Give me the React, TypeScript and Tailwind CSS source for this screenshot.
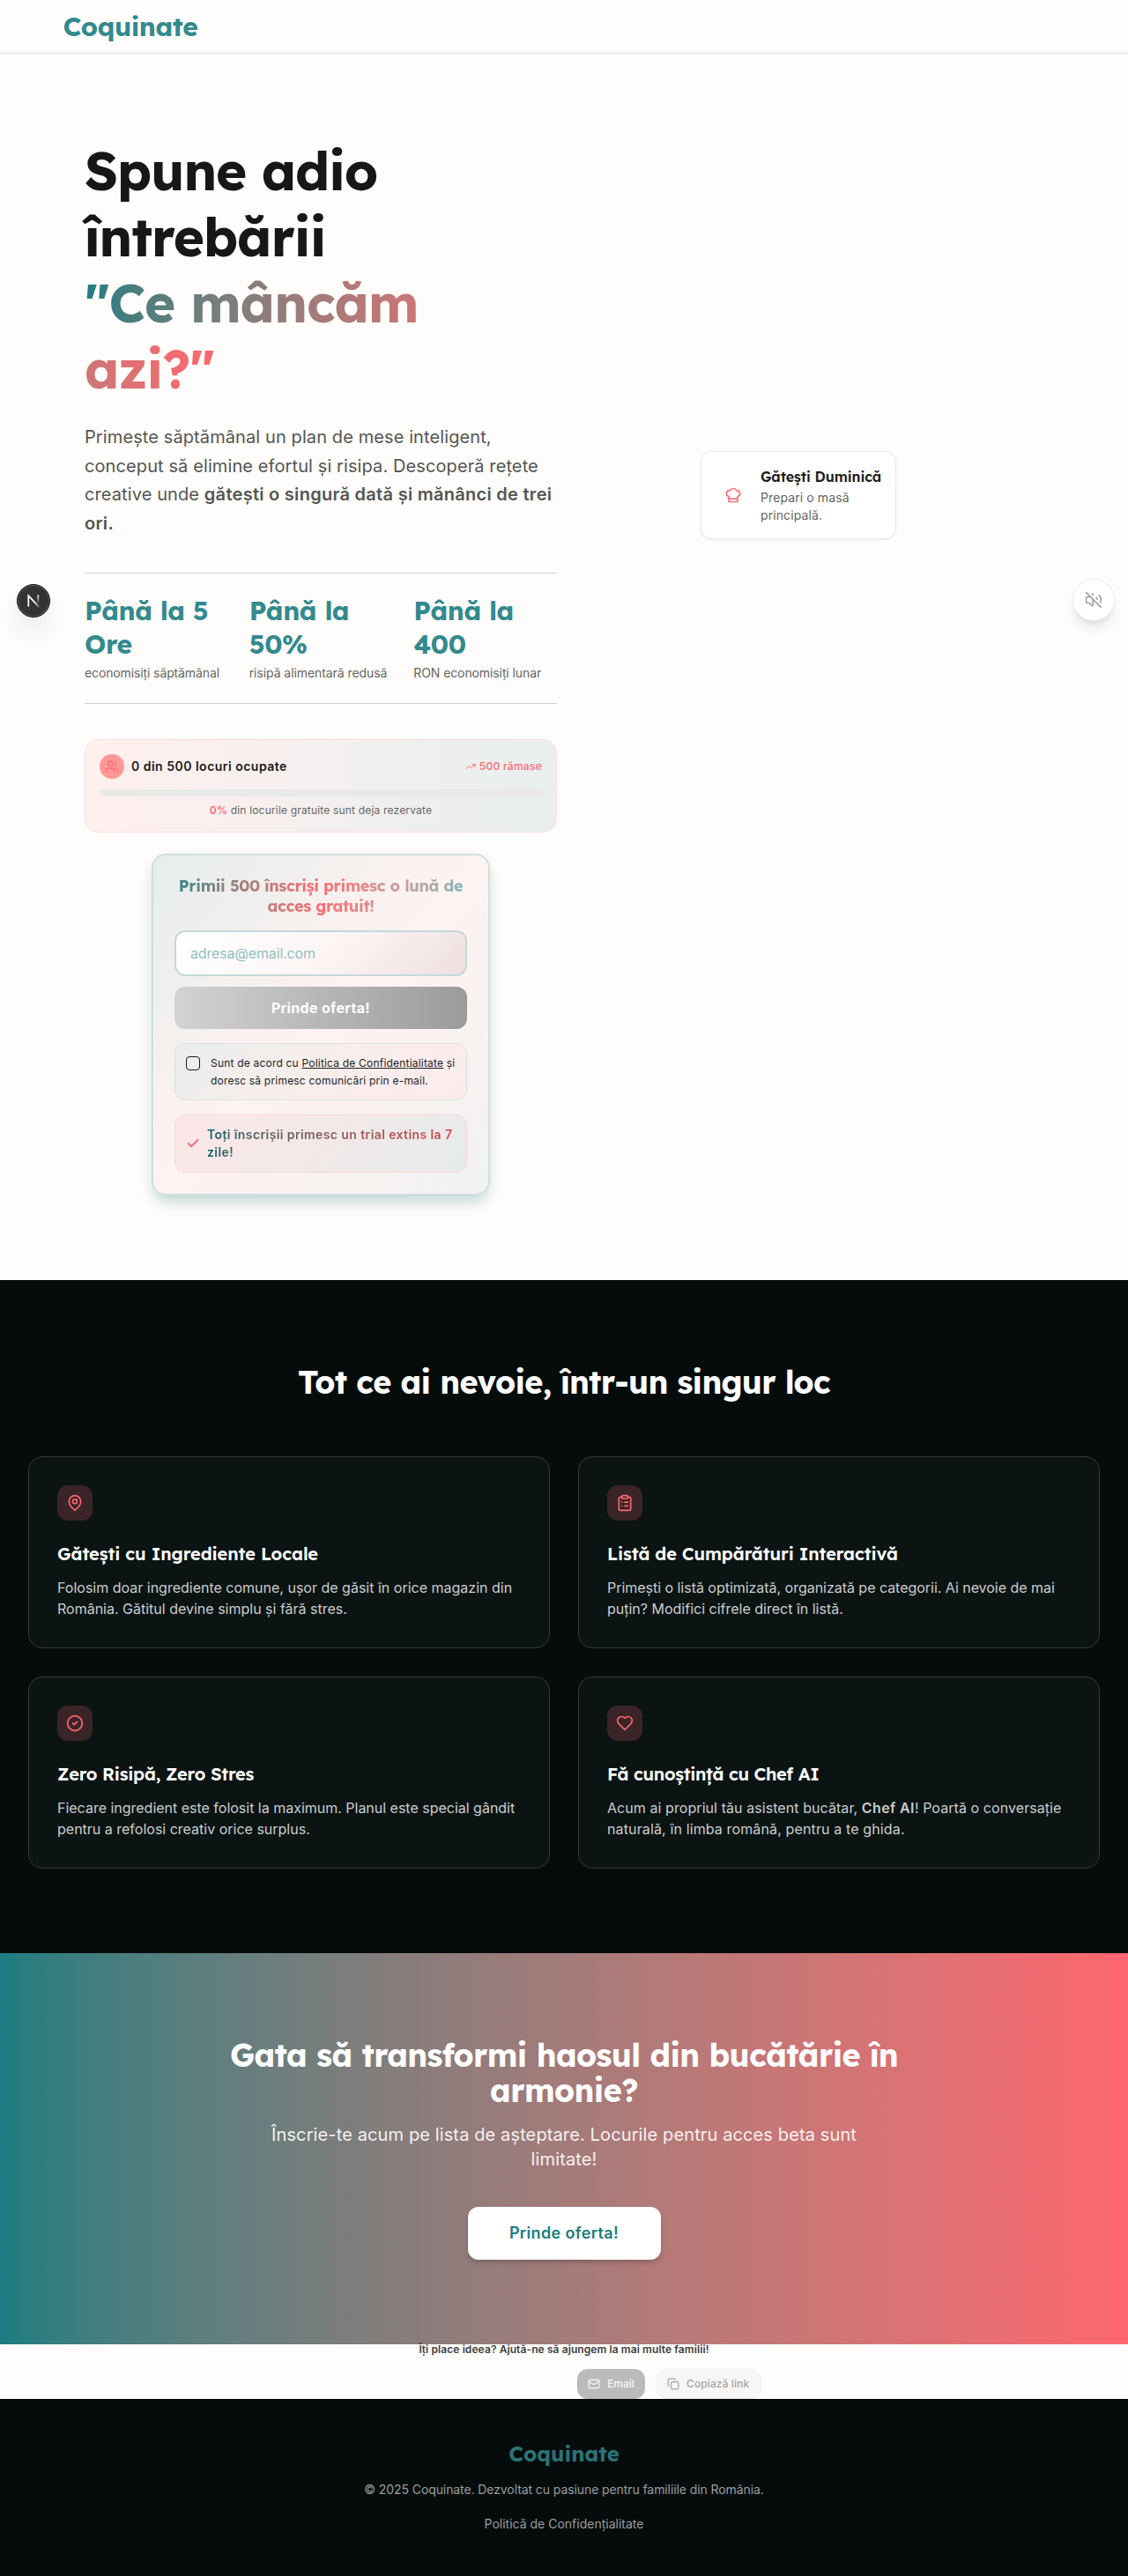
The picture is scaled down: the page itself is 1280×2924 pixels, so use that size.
import type { ReactNode } from "react";
import { Check, CircleCheck, ClipboardList, Copy, Mail, TrendingUp, Users, VolumeOff } from "lucide-react";

const strokeProps = {
  viewBox: "0 0 24 24",
  fill: "none",
  stroke: "currentColor",
  strokeWidth: 2,
  strokeLinecap: "round",
  strokeLinejoin: "round",
} as const;

function PinIcon() {
  return (
    <svg {...strokeProps} className="size-5">
      <path d="M20 10c0 6-8 12-8 12s-8-6-8-12a8 8 0 0 1 16 0Z" />
      <circle cx="12" cy="10" r="3" />
    </svg>
  );
}

function HeartIcon() {
  return (
    <svg {...strokeProps} className="size-5">
      <path d="M19 14c1.49-1.46 3-3.21 3-5.5A5.5 5.5 0 0 0 16.5 3c-1.76 0-3 .5-4.5 2-1.5-1.5-2.74-2-4.5-2A5.5 5.5 0 0 0 2 8.5c0 2.3 1.5 4.05 3 5.5l7 7Z" />
    </svg>
  );
}

function ChefHatIcon() {
  return (
    <svg {...strokeProps} className="size-5">
      <path d="M6 13.87A4 4 0 0 1 7.41 6a5.11 5.11 0 0 1 1.05-1.54 5 5 0 0 1 7.08 0A5.11 5.11 0 0 1 16.59 6 4 4 0 0 1 18 13.87V21H6Z" />
      <line x1="6" x2="18" y1="17" y2="17" />
    </svg>
  );
}

function Header() {
  return (
    <header className="flex h-[61px] items-center border-b border-[#dddddc] bg-[#fffefc] px-[71.5px] shadow-[inset_0_-2px_0_#f8f8f6]">
      <span className="font-['Lexend','Inter',sans-serif] text-3xl leading-9 font-bold tracking-[-0.45px] text-[#338a8d]">Coquinate</span>
    </header>
  );
}

function Stat({ first, second, label, spacing }: { first: string; second: ReactNode; label: string; spacing: string }) {
  return (
    <div className="whitespace-nowrap">
      <p className="font-['Lexend','Inter',sans-serif] text-[30px] leading-[37.5px] font-bold tracking-[-0.4px] text-[#338a8d]">
        {first}
        <br />
        {second}
      </p>
      <p className={`mt-1 text-sm text-[#666665] ${spacing}`}>{label}</p>
    </div>
  );
}

function SpotsCard() {
  return (
    <div className="mt-10 rounded-2xl border border-[#fddcdc] bg-linear-to-r from-[#fff0ef] to-[#e8efee] p-4">
      <div className="flex items-center">
        <div className="flex size-7 items-center justify-center rounded-full bg-[#fe9898] text-[#fd6c74]">
          <Users className="size-4" />
        </div>
        <span className="ml-2 text-sm font-semibold tracking-[0.49px] text-[#1a1a1a]">0 din 500 locuri ocupate</span>
        <span className="ml-auto flex items-center gap-1 text-xs font-medium tracking-[0.27px] text-[#fe6a72]">
          <TrendingUp className="size-3" />
          500 rămase
        </span>
      </div>
      <div className="mt-3 h-2 rounded-full bg-linear-to-r from-[#e8eae9] via-[#e9e9ea] to-[#ece8e8]" />
      <p className="mt-2 text-center text-xs tracking-[0.18px] text-[#666665]">
        <span className="font-semibold text-[#fe6a72]">0%</span> din locurile gratuite sunt deja rezervate
      </p>
    </div>
  );
}

function SignupForm() {
  return (
    <div className="mx-auto mt-6 w-96 rounded-2xl border-2 border-[#cfdfdf] bg-linear-135 from-[#e6edec] via-[#fef3f1] to-[#f1f2f1] p-6 shadow-[0_10px_15px_-3px_rgba(51,138,141,0.27),0_4px_24px_rgba(0,0,0,0.04)]">
      <h2 className="text-center font-['Lexend','Inter',sans-serif] text-lg leading-[22.5px] font-bold whitespace-nowrap">
        <span className="block bg-linear-to-r from-[#2f8487] via-[#fe6a72] to-[#7fb9ba] bg-clip-text tracking-[-0.33px] text-transparent">
          Primii 500 înscriși primesc o lună de
          <br />
          acces gratuit!
        </span>
      </h2>
      <div className="mt-4 flex h-[52px] items-center rounded-xl border-2 border-[#c3d9d9] bg-linear-135 from-white via-[#fcf6f5] via-50% to-[#efdfe0] px-4 text-base tracking-[-0.14px] text-[#93bfc0]">
        adresa@email.com
      </div>
      <button className="mt-3 block h-12 w-full rounded-xl bg-linear-to-r from-[#d3d3d3] to-[#9b9b9b] text-base font-bold tracking-[0.33px] text-white">
        Prinde oferta!
      </button>
      <label className="mt-4 flex gap-3 rounded-xl border border-[#d8e1e0] bg-linear-135 from-[#ebeeed] via-[#f8eeec] to-[#fdebeb] p-3">
        <span className="mt-0.5 size-4 shrink-0 rounded-[4px] border border-[#171717]" />
        <span className="text-xs leading-[19.5px] tracking-[0.2px] whitespace-nowrap text-[#1d1d1d]">
          Sunt de acord cu <a className="underline">Politica de Confidențialitate</a> și
          <br />
          doresc să primesc comunicări prin e-mail.
        </span>
      </label>
      <div className="mt-4 flex items-center gap-2 rounded-xl border border-[#f8d6d8] bg-linear-135 from-[#fde7e7] to-[#e5ebea] p-3">
        <Check className="size-4 shrink-0 text-[#fe6a72]" strokeWidth={3} />
        <span className="flex-1 bg-linear-to-r from-[#006266] to-[#dc3b4b] bg-clip-text text-sm leading-5 font-semibold tracking-[0.4px] whitespace-nowrap text-transparent">
          Toți înscrișii primesc un trial extins la 7
          <br />
          zile!
        </span>
      </div>
    </div>
  );
}

function Hero() {
  return (
    <section className="flex items-start px-24 pt-[95px] pb-24">
      <div className="w-[536px] shrink-0">
        <h1 className="font-['Lexend','Inter',sans-serif] text-6xl leading-[75px] font-bold tracking-[-1.3px] whitespace-nowrap text-[#171717]">
          Spune adio
          <br />
          <span className="tracking-[-1.15px]">întrebării</span>
          <br />
          <span className="bg-linear-to-r from-[#1b7d80] to-[#fe676f] bg-clip-text tracking-[-1.15px] text-transparent">
            "Ce mâncăm
            <br />
            azi?"
          </span>
        </h1>
        <p className="mt-6 text-xl leading-[32.5px] tracking-[0.1px] whitespace-nowrap text-[#555554]">
          Primește săptămânal un plan de mese inteligent,
          <br />
          conceput să elimine efortul și risipa. Descoperă rețete
          <br />
          creative unde{" "}
          <strong className="font-semibold tracking-[0.28px]">
            gătești o singură dată și mănânci de trei
            <br />
            ori.
          </strong>
        </p>
        <div className="mt-10 grid grid-cols-3 gap-6 border-y border-[#cdcdcc] py-6">
          <Stat first="Până la 5" second="Ore" label="economisiți săptămânal" spacing="tracking-[-0.12px]" />
          <Stat first="Până la" second="50%" label="risipă alimentară redusă" spacing="tracking-[-0.07px]" />
          <Stat first="Până la" second="400" label="RON economisiți lunar" spacing="tracking-[-0.1px]" />
        </div>
        <SpotsCard />
        <SignupForm />
      </div>
      <div className="mt-[356px] ml-[163px] flex h-[100px] w-[222px] items-center gap-[11px] rounded-xl border border-[#e9e9e8] bg-white pl-4 whitespace-nowrap shadow-[0_1px_3px_rgba(0,0,0,0.06)]">
        <div className="flex size-10 items-center justify-center text-[#fe7078]">
          <ChefHatIcon />
        </div>
        <div>
          <h3 className="mb-0.5 font-['Lexend','Inter',sans-serif] text-base leading-6 font-semibold tracking-[-0.1px] text-[#1c1c1c]">Gătești Duminică</h3>
          <p className="text-sm tracking-[0.1px] text-[#666665]">
            Prepari o masă
            <br />
            principală.
          </p>
        </div>
      </div>
    </section>
  );
}

function Feature({ icon, title, children, spacing }: { icon: ReactNode; title: string; children: ReactNode; spacing: string }) {
  return (
    <article className="h-[218px] rounded-2xl border border-[#353a3a] bg-[#0b1413] p-8 whitespace-nowrap">
      <div className="flex size-10 items-center justify-center rounded-xl bg-[#3a2427] text-[#fe676f]">{icon}</div>
      <h3 className={`mt-6 mb-3 font-['Lexend','Inter',sans-serif] text-xl leading-7 font-semibold text-white ${spacing}`}>{title}</h3>
      <p className="text-base text-[#cbcdcd]">{children}</p>
    </article>
  );
}

function Features() {
  return (
    <section className="bg-[#060c0c] px-8 py-24">
      <h2 className="mb-16 text-center font-['Lexend','Inter',sans-serif] text-4xl leading-10 font-bold tracking-[-0.67px] text-white">
        Tot ce ai nevoie, într-un singur loc
      </h2>
      <div className="grid grid-cols-2 gap-8">
        <Feature icon={<PinIcon />} title="Gătești cu Ingrediente Locale" spacing="tracking-[-0.08px]">
          Folosim doar ingrediente comune, ușor de găsit în orice magazin din
          <br />
          România. Gătitul devine simplu și fără stres.
        </Feature>
        <Feature icon={<ClipboardList className="size-5" />} title="Listă de Cumpărături Interactivă" spacing="tracking-[-0.11px]">
          <span className="tracking-[-0.03px]">Primești o listă optimizată, organizată pe categorii. Ai nevoie de mai</span>
          <br />
          puțin? Modifici cifrele direct în listă.
        </Feature>
        <Feature icon={<CircleCheck className="size-5" />} title="Zero Risipă, Zero Stres" spacing="tracking-[-0.24px]">
          <span className="tracking-[-0.01px]">Fiecare ingredient este folosit la maximum. Planul este special gândit</span>
          <br />
          pentru a refolosi creativ orice surplus.
        </Feature>
        <Feature icon={<HeartIcon />} title="Fă cunoștință cu Chef AI" spacing="tracking-[-0.35px]">
          <span className="tracking-[0.07px]">
            Acum ai propriul tău asistent bucătar, <strong className="font-semibold tracking-[0.4px]">Chef AI</strong>! Poartă o conversație
          </span>
          <br />
          <span className="tracking-[0.13px]">naturală, în limba română, pentru a te ghida.</span>
        </Feature>
      </div>
    </section>
  );
}

function CallToAction() {
  return (
    <section className="flex h-[444px] flex-col items-center bg-linear-to-r from-[#1a7d80] to-[#fe676f] pt-24 text-center">
      <h2 className="font-['Lexend','Inter',sans-serif] text-4xl leading-10 font-bold tracking-[-0.6px] text-white">
        Gata să transformi haosul din bucătărie în
        <br />
        armonie?
      </h2>
      <p className="mt-4 text-xl leading-7 tracking-[0.12px] text-[#f6f0f0]">
        Înscrie-te acum pe lista de așteptare. Locurile pentru acces beta sunt
        <br />
        limitate!
      </p>
      <button className="mt-10 h-15 w-[219px] rounded-xl bg-white text-lg font-semibold tracking-[0.35px] text-[#1a7d80] shadow-[0_4px_6px_-1px_rgba(0,0,0,0.18),0_2px_4px_-2px_rgba(0,0,0,0.15)]">
        Prinde oferta!
      </button>
    </section>
  );
}

function Share() {
  return (
    <section className="relative mx-auto -mt-0.5 w-[448px]">
      <p className="text-center text-xs font-semibold tracking-[0.09px] text-[#40403f]">Îți place ideea? Ajută-ne să ajungem la mai multe familii!</p>
      <div className="mt-3.5 flex h-[34px] justify-end gap-3 text-xs font-medium">
        <button className="flex w-[77px] items-center gap-2 rounded-xl bg-[#bcbbba] pl-3 text-[#f8f7f7]">
          <Mail className="size-3.5" />
          Email
        </button>
        <button className="flex w-[120px] items-center gap-2 rounded-xl border border-[#f1f1f0] bg-[#f7f6f5] pl-3 tracking-[0.1px] text-[#a5a4a4]">
          <Copy className="size-3.5" />
          Copiază link
        </button>
      </div>
    </section>
  );
}

function Footer() {
  return (
    <footer className="flex h-[201px] flex-col items-center bg-[#060c0c] pt-12 text-sm text-[#9b9d9d]">
      <span className="font-['Lexend','Inter',sans-serif] text-2xl leading-[29px] font-bold text-[#2b7375]">Coquinate</span>
      <p className="mt-4 tracking-[-0.09px]">© 2025 Coquinate. Dezvoltat cu pasiune pentru familiile din România.</p>
      <a className="mt-[19px]">Politică de Confidențialitate</a>
    </footer>
  );
}

function DevBadge() {
  return (
    <div className="absolute top-[663px] left-[19px] flex size-[38px] items-center justify-center rounded-full border border-[#161616] bg-[#333333] shadow-[inset_0_0_0_1px_#5c5c5c,0_16px_32px_-8px_rgba(0,0,0,0.24)]">
      <svg viewBox="0 0 14 14" className="size-4" fill="none">
        <defs>
          <linearGradient id="stem" x1="0" y1="0" x2="0" y2="1">
            <stop offset="0" stopColor="#fff" />
            <stop offset="1" stopColor="#fff" stopOpacity="0" />
          </linearGradient>
          <linearGradient id="diagonal" x1="0" y1="0" x2="1" y2="1">
            <stop offset="0.6" stopColor="#fff" />
            <stop offset="1" stopColor="#fff" stopOpacity="0.2" />
          </linearGradient>
        </defs>
        <path d="M2 12.6V1.8L12.6 13.2" stroke="url(#diagonal)" strokeWidth="1.5" />
        <rect x="10.9" y="1.2" width="1.5" height="8.6" fill="url(#stem)" />
      </svg>
    </div>
  );
}

function MuteButton() {
  return (
    <button className="absolute top-[657px] right-[15px] flex size-12 items-center justify-center rounded-full border border-[#ececeb] bg-white text-[#a4a4a4] shadow-[0_10px_15px_-3px_rgba(0,0,0,0.1),0_4px_6px_-4px_rgba(0,0,0,0.1)]">
      <VolumeOff className="size-5" />
    </button>
  );
}

export default function App() {
  return (
    <div className="relative w-full overflow-hidden bg-[#fefdfb] font-['Inter',sans-serif]">
      <Header />
      <Hero />
      <Features />
      <CallToAction />
      <Share />
      <Footer />
      <DevBadge />
      <MuteButton />
    </div>
  );
}
